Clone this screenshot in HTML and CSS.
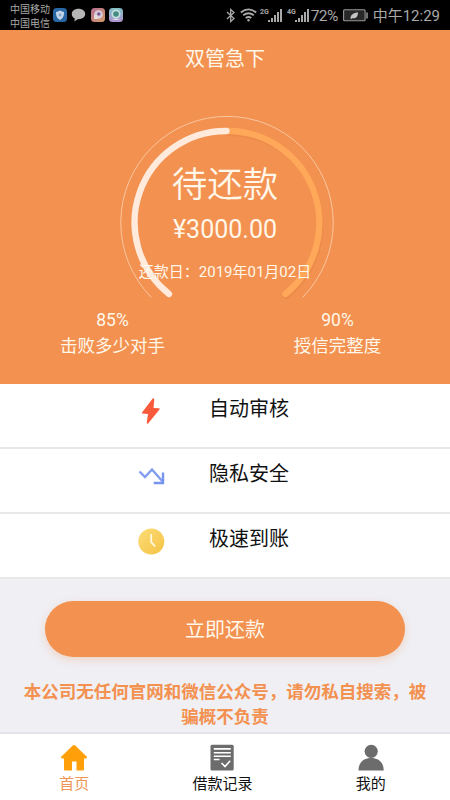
FILE: index.html
```html
<!DOCTYPE html>
<html lang="zh-CN">
<head>
<meta charset="utf-8">
<title>双管急下</title>
<link rel="stylesheet" href="styles.css">
</head>
<body>
<div class="app">
  <header class="status">
    <div class="carriers"><span>中国移动</span><span>中国电信</span></div>
    <div class="notices">
      <svg width="14" height="14" viewBox="0 0 14 14"><rect width="14" height="14" rx="3.5" fill="#2867a4"/><path d="M7 2.5c1.5 1 2.6 1.2 4 1.4 0 4-.8 6-4 8-3.200-2-4-4-4-8 1.400-.2 2.500-.4 4-1.400Z" fill="#c5d5e8"/><circle cx="7" cy="7" r="1.400" fill="#7fa3cf"/></svg>
      <svg width="15" height="14" viewBox="0 0 15 14"><path d="M7.500.8C3.700.8.8 3 .8 6c0 2 1.200 3.600 3 4.500L3.300 13.500l3.400-2.300c4.300.3 7.500-2 7.500-5.200 0-3-2.900-5.200-6.700-5.200Z" fill="#b5b5b5"/></svg>
      <svg width="14" height="14" viewBox="0 0 14 14"><defs><linearGradient id="ga" x2="1" y2="1"><stop stop-color="#b56f93"/><stop offset="1" stop-color="#d69b68"/></linearGradient></defs><rect width="14" height="14" rx="3.500" fill="url(#ga)"/><circle cx="7.500" cy="6.500" r="4.300" fill="#d8cddb"/><path d="M3 11V7h4v4Z" fill="#e5dada"/><circle cx="7.800" cy="6" r="1.800" fill="#775894"/></svg>
      <svg width="14" height="14" viewBox="0 0 14 14"><defs><linearGradient id="gb" x2="0" y2="1"><stop stop-color="#7fc0c4"/><stop offset="1" stop-color="#b092ce"/></linearGradient></defs><rect width="14" height="14" rx="3.500" fill="url(#gb)"/><circle cx="7" cy="6" r="4.500" fill="#c6dfdc"/><circle cx="7" cy="6" r="2.800" fill="#438c84"/><path d="M3 12q4-3 8 0Z" fill="#ded5e5"/></svg>
    </div>
    <div class="system">
      <svg width="10" height="15" viewBox="0 0 10 15" fill="none" stroke="#a9a9a9" stroke-width="1.300"><path d="m1 4 7 6.500-3.300 3V1.500L8 4.500 1 11"/></svg>
      <svg class="wifi" width="17" height="14" viewBox="0 0 17 14" fill="none" stroke="#a9a9a9" stroke-width="1.800"><path d="M.8 4.500Q8.500-1.800 16.200 4.500M3.200 7.300q5.300-4.200 10.600 0M5.700 10q2.800-2 5.600 0"/><circle cx="8.500" cy="12.200" r="1.200" fill="#a9a9a9" stroke="none"/></svg>
      <svg class="signal" width="23" height="15" viewBox="0 0 23 15"><text class="net" x="0" y="6">2G</text><path d="M8 12h2v2H8zM11 10h2v4h-2zM14 7h2v7h-2zM17 4h2v10h-2zM20 1h2v13h-2z" fill="#a9a9a9"/></svg>
      <svg class="signal second" width="23" height="15" viewBox="0 0 23 15"><text class="net" x="0" y="6">4G</text><path d="M8 12h2v2H8zM11 10h2v4h-2zM14 7h2v7h-2zM17 4h2v10h-2zM20 1h2v13h-2z" fill="#a9a9a9"/></svg>
      <span class="percent">72%</span>
      <svg class="battery" width="26" height="13" viewBox="0 0 26 13"><rect x=".6" y=".8" width="21.500" height="11" rx="1" fill="#282828" stroke="#999" stroke-width="1.100"/><path d="M24 3.500v6" stroke="#999" stroke-width="1.500"/><path d="M7.500 9.500C7.500 6 10.500 3.500 15 3.500c0 4.500-2.500 6.500-6 5.700l-1 1Z" fill="#c3c3c3"/></svg>
      <span class="clock">中午12:29</span>
    </div>
  </header>

  <section class="hero">
    <h1 class="title">双管急下</h1>
    <div class="gauge">
      <svg class="dial" width="220" height="190" viewBox="117 112 220 190" fill="none" stroke-linecap="round">
        <path d="M151 297A106.300 106.300 0 1 1 303 297" stroke="#fac7a0" stroke-width="1"/>
        <path d="M228 133A91.800 91.800 0 0 1 286.500 296" stroke="#ec8b49" stroke-width="6"/>
        <path d="M227 131A91.800 91.800 0 0 1 285.500 294" stroke="#ffa859" stroke-width="6.300"/>
        <path d="M169 294A91.500 91.500 0 0 1 226.500 131" stroke="#ffeadc" stroke-width="6.300"/>
      </svg>
      <div class="state">待还款</div>
      <div class="amount">¥3000.00</div>
      <div class="due">还款日：2019年01月02日</div>
    </div>
    <div class="stats">
      <div class="stat"><span>85%</span><span>击败多少对手</span></div>
      <div class="stat"><span>90%</span><span>授信完整度</span></div>
    </div>
  </section>

  <ul class="features">
    <li><svg width="28" height="28" viewBox="1 1 28 28"><path d="M15.700 1.500 5 15.500q-.5 1 .5 1.100l5.500.4-1.300 9q.3 1.200 1.400.5L22.500 12.500q.6-1.100-.5-1.200l-5.500-.3.8-8.300q-.4-1.900-1.600-1.200Z" fill="#f95a3b"/></svg><span>自动审核</span></li>
    <li><svg width="28" height="28" viewBox="0 0 28 28" fill="none" stroke="#829cf0" stroke-width="2.400"><path d="m1.500 8.500 5.500 5.500 7-7.500 10.800 12.300"/><path d="M25 9.500v10.500H15.700" stroke="#7795ef"/></svg><span>隐私安全</span></li>
    <li><svg width="28" height="28" viewBox="0 0 28 28"><defs><linearGradient id="gc" x2="1" y2="1"><stop stop-color="#fbdc78"/><stop offset="1" stop-color="#f6c344"/></linearGradient></defs><circle cx="13.300" cy="13.500" r="13" fill="url(#gc)"/><path d="M13.200 7v7.200l3.500 3.800" fill="none" stroke="#fff8df" stroke-width="1.800" stroke-linecap="round" stroke-linejoin="round"/></svg><span>极速到账</span></li>
  </ul>

  <main class="action">
    <button class="pay">立即还款</button>
    <p class="warning">本公司无任何官网和微信公众号，请勿私自搜索，被骗概不负责</p>
  </main>

  <nav class="tabs">
    <a class="tab active"><svg width="28" height="28" viewBox="0 0 28 28"><path d="M12.700 1.500q1.300-1.200 2.600 0l11.500 11.300q.8 1.400-.8 1.700h-2v11q0 1-1 1h-6.500v-9h-4.500v9H5q-1 0-1-1v-11H2q-1.600-.3-.8-1.700Z" fill="#ff9f0a"/></svg><span>首页</span></a>
    <a class="tab"><svg width="28" height="28" viewBox="0 0 28 28"><rect x="2.500" y=".8" width="23.200" height="25.700" rx="1.500" fill="#6c6c6c"/><path d="M5.800 4.900h17M5.800 8.800h17M5.800 12.200h17M5.800 15.500h5.700M13.500 19l3.500 3.500 5.200-5.700" fill="none" stroke="#fff" stroke-width="1.600"/></svg><span>借款记录</span></a>
    <a class="tab"><svg width="28" height="28" viewBox="0 0 28 28"><circle cx="14.200" cy="7.300" r="6.600" fill="#6c6c6c"/><path d="M1.500 26.500c0-7.500 4.500-12.500 12.600-12.500s12.600 5 12.600 12.500Z" fill="#6c6c6c"/></svg><span>我的</span></a>
  </nav>
</div>
</body>
</html>
```
FILE: styles.css
```css
* { box-sizing: border-box; }
body {
  margin: 0;
  font-family: Roboto, "Noto Sans CJK SC", sans-serif;
  background: #efeff4;
}
svg { display: block; flex: none; }
.app { display: flex; flex-direction: column; width: 450px; height: 800px; overflow: hidden; }

.status { display: flex; align-items: center; height: 30px; padding-left: 10px; background: #000; color: #a9a9a9; }
.carriers { display: flex; flex-direction: column; width: 42.500px; padding-top: 3px; font-size: 10px; line-height: 14px; white-space: nowrap; }
.notices { display: flex; gap: 4.500px; }
.system { display: flex; align-items: center; height: 30px; margin-left: auto; padding-right: 10px; }
.wifi { margin-left: 4px; }
.signal { margin-left: 3px; }
.signal.second { margin-left: 4px; }
.net { font: bold 7px Roboto, sans-serif; fill: #a9a9a9; }
.percent { margin-left: 1px; width: 28px; padding-top: 2px; font-size: 15.500px; line-height: 28px; white-space: nowrap; letter-spacing: -0.500px; }
.battery { margin-left: 4px; }
.clock { margin-left: 4px; padding-top: 2px; font-size: 15px; line-height: 28px; white-space: nowrap; }

.hero { height: 354px; background: #f39150; color: #fff7ea; text-align: center; }
.title { margin: 0; padding-top: 14px; font-size: 20px; font-weight: 400; line-height: 30px; }
.gauge { position: relative; display: flex; flex-direction: column; width: 220px; height: 190px; margin: 38px 0 0 117px; padding-top: 48px; }
.dial { position: absolute; top: 0; left: 0; }
.state, .amount, .due { position: relative; left: -2px; white-space: nowrap; }
.state { font-size: 35.500px; line-height: 50px; font-weight: 350; }
.amount { font-size: 25px; line-height: 40px; }
.due { padding-top: 9px; font-size: 15px; line-height: 26px; }
.stats { display: grid; grid-template-columns: 1fr 1fr; padding-top: 6px; }
.stat { display: flex; flex-direction: column; font-size: 17.500px; line-height: 25px; }
.stat span + span { padding-top: 1px; }

.features { margin: 0; padding: 0; list-style: none; background: #fff; }
.features li { display: flex; align-items: flex-start; height: 65px; padding: 14px 0 0 138px; border-bottom: 2px solid #e8e8e9; color: #111; }
.features span { margin: -4px 0 0 43px; font-size: 20px; line-height: 30px; }

.action { flex: 1; padding: 22px 22px 0; text-align: center; }
.pay { width: 360px; height: 56px; padding: 2px 0 0; border: 0; border-radius: 28px; background: #f39150; color: #fff7ea; box-shadow: 0 3px 8px rgba(243, 145, 80, .28); font: 20px/54px Roboto, "Noto Sans CJK SC", sans-serif; }
.warning { margin: 23px 0 0; color: #f39150; font-size: 17.500px; font-weight: 700; line-height: 25px; }

.tabs { display: grid; grid-template-columns: repeat(3, 1fr); height: 68px; padding-right: 5px; border-top: 2px solid #e3e3ea; background: #fff; color: #111; }
.tab { display: flex; flex-direction: column; align-items: center; padding-top: 10px; font-size: 15px; line-height: 22px; }
.tab span { margin-top: 1px; }
.tab.active { color: #ef9656; }
```
